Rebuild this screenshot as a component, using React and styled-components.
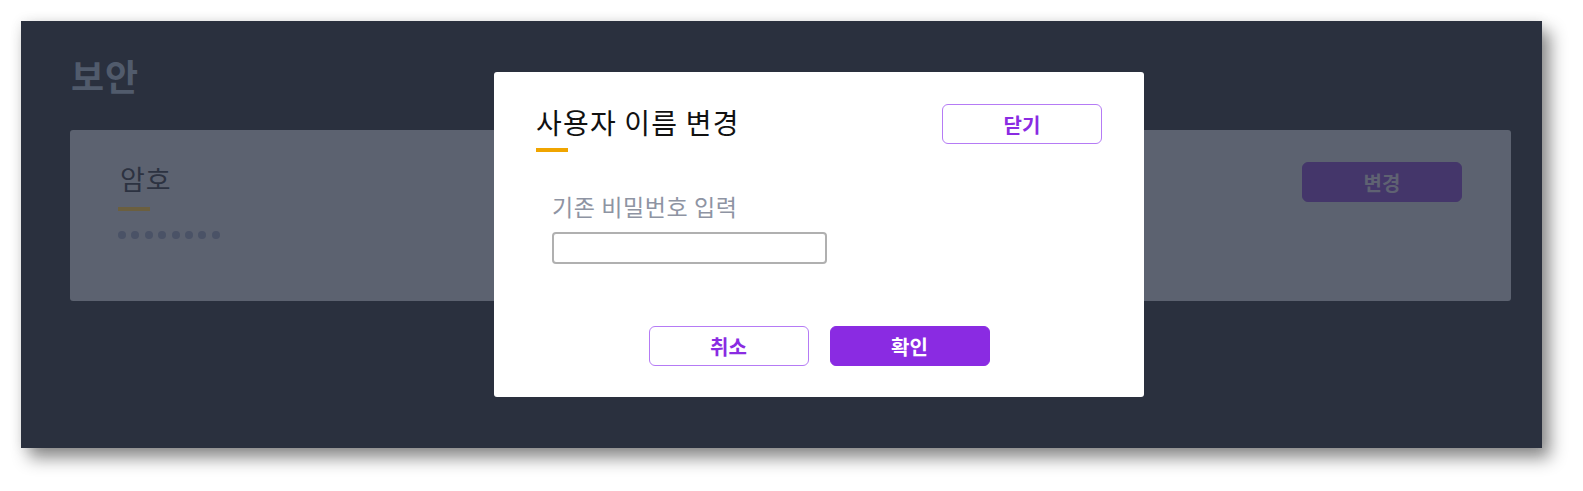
import React from 'react'
import styled, { createGlobalStyle } from 'styled-components'

const GlobalStyle = createGlobalStyle`
  html, body {
    margin: 0;
    padding: 0;
    background: #ffffff;
    font-family: "Noto Sans CJK KR", "Noto Sans", sans-serif;
  }
`

const Shot = styled.div`
  padding: 21px 41px 42px 21px;
`

const Frame = styled.div`
  position: relative;
  height: 427px;
  box-sizing: border-box;
  padding: 36px 31px 0 49px;
  background-color: #2a303e;
  box-shadow: 8px 10px 16px rgba(0, 0, 0, 0.45), 0 0 12px rgba(0, 0, 0, 0.08);
`

const PageTitle = styled.h1`
  margin: 0 0 37px 1px;
  font-size: 36px;
  line-height: 1;
  font-weight: 700;
  letter-spacing: 1px;
  color: #515b6c;
`

const Card = styled.section`
  display: flex;
  justify-content: space-between;
  align-items: flex-start;
  height: 171px;
  box-sizing: border-box;
  padding: 32px 49px 0 48px;
  background-color: #5c6270;
  border-radius: 3px;
`

const Field = styled.div`
  margin-top: 3px;
`

const FieldName = styled.h2`
  margin: 0 0 0 2px;
  font-size: 27px;
  line-height: 1;
  font-weight: 400;
  letter-spacing: 1px;
  color: #2c3241;
`

const Bar = styled.div`
  width: 32px;
  height: 4px;
  margin-top: ${p => p.$gap}px;
  background-color: ${p => p.$color};
`

const Dots = styled.div`
  display: flex;
  gap: 5.4px;
  margin-top: 20px;
`

const Dot = styled.span`
  width: 8px;
  height: 8px;
  border-radius: 50%;
  background-color: #4a5266;
`

const Button = styled.button`
  width: 160px;
  height: 40px;
  box-sizing: border-box;
  border-radius: 6px;
  font-family: inherit;
  font-size: 20px;
  font-weight: 700;
  cursor: pointer;
  border: 1px solid ${p => p.$border};
  background-color: ${p => p.$bg};
  color: ${p => p.$color};
`

const Modal = styled.div`
  position: absolute;
  left: 473px;
  top: 51px;
  width: 650px;
  height: 325px;
  box-sizing: border-box;
  padding: 32px 42px 31px 42px;
  display: flex;
  flex-direction: column;
  background-color: #ffffff;
  border-radius: 3px;
`

const ModalHeader = styled.div`
  display: flex;
  justify-content: space-between;
  align-items: flex-start;
`

const TitleBlock = styled.div`
  margin-top: 4px;
`

const ModalTitle = styled.h3`
  margin: 0;
  font-size: 28px;
  line-height: 1;
  font-weight: 400;
  letter-spacing: 1.2px;
  color: #111111;
`

const Label = styled.label`
  display: block;
  margin: 43px 0 0 16px;
  font-size: 23px;
  line-height: 1;
  letter-spacing: 0.6px;
  color: #8e94a3;
`

const Input = styled.input`
  display: block;
  width: 275px;
  height: 32px;
  box-sizing: border-box;
  margin: 14px 0 0 16px;
  border: 2px solid #b0b0b0;
  border-radius: 4px;
  outline: none;
`

const Footer = styled.div`
  display: flex;
  justify-content: center;
  gap: 21px;
  margin-top: auto;
`

export default function App() {
  return (
    <>
      <GlobalStyle />
      <Shot>
        <Frame>
          <PageTitle>보안</PageTitle>
          <Card>
            <Field>
              <FieldName>암호</FieldName>
              <Bar $gap={15} $color="#6b5f3f" />
              <Dots>
                {Array.from({ length: 8 }).map((_, i) => <Dot key={i} />)}
              </Dots>
            </Field>
            <Button $bg="#44366a" $border="#44366a" $color="#5f6272">변경</Button>
          </Card>

          <Modal>
            <ModalHeader>
              <TitleBlock>
                <ModalTitle>사용자 이름 변경</ModalTitle>
                <Bar $gap={12} $color="#f0a500" />
              </TitleBlock>
              <Button $bg="#ffffff" $border="#b57bf5" $color="#8a2be2">닫기</Button>
            </ModalHeader>
            <Label>기존 비밀번호 입력</Label>
            <Input type="password" />
            <Footer>
              <Button $bg="#ffffff" $border="#b57bf5" $color="#8a2be2">취소</Button>
              <Button $bg="#8a2be2" $border="#8a2be2" $color="#ffffff">확인</Button>
            </Footer>
          </Modal>
        </Frame>
      </Shot>
    </>
  )
}
